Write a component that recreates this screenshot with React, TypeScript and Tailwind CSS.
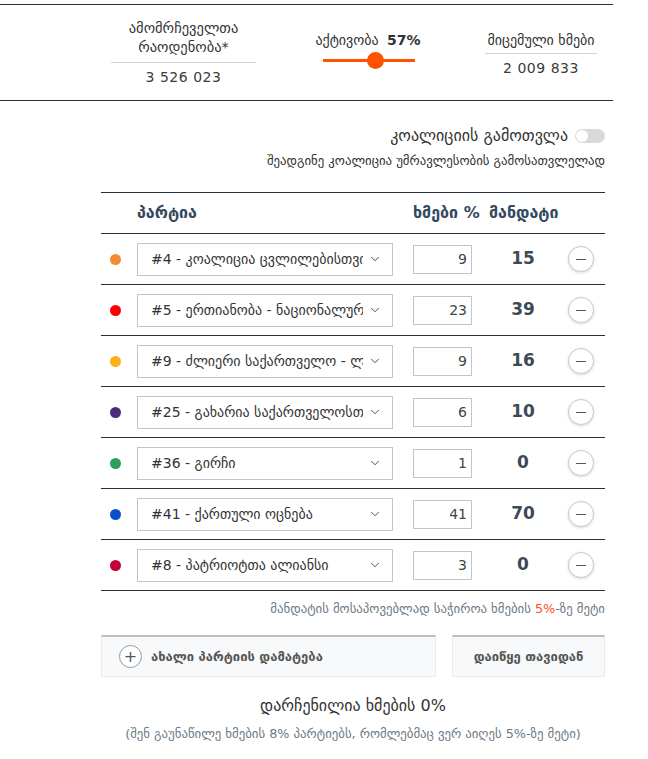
import React from 'react';
import { ChevronDown } from 'lucide-react';

interface Party {
	id: number;
	name: string;
	color: string;
	votes: number;
	seats: number;
}

const parties: Party[] = [
	{ id: 4, name: '#4 - კოალიცია ცვლილებისთვის', color: '#f28c30', votes: 9, seats: 15 },
	{ id: 5, name: '#5 - ერთიანობა - ნაციონალური მოძრაობა', color: '#ff0000', votes: 23, seats: 39 },
	{ id: 9, name: '#9 - ძლიერი საქართველო - ლელო', color: '#fdb018', votes: 9, seats: 16 },
	{ id: 25, name: '#25 - გახარია საქართველოსთვის', color: '#4b2d7f', votes: 6, seats: 10 },
	{ id: 36, name: '#36 - გირჩი', color: '#2e9e5b', votes: 1, seats: 0 },
	{ id: 41, name: '#41 - ქართული ოცნება', color: '#0d4fc7', votes: 41, seats: 70 },
	{ id: 8, name: '#8 - პატრიოტთა ალიანსი', color: '#c4003a', votes: 3, seats: 0 },
];

const App = () => {
	return (
		<div className="w-[648px] min-h-[759px] bg-white text-[#333] font-['DejaVu_Sans',sans-serif]">
			<div className="w-[613px] pt-[4px]">
				{/* Stats */}
				<div className="flex h-[97px] border-t border-b border-[#24313d]">
					<div className="ml-[111px] w-[145px] pt-[14px] text-center">
						<div className="text-[14.5px] leading-[19px]">ამომრჩეველთა</div>
						<div className="text-[14.5px] leading-[19px]">რაოდენობა*</div>
						<div className="mt-[5px] border-t border-[#cfd4d8]" />
						<div className="mt-[4px] text-[14px] leading-[20px] tracking-[0.5px] text-[#3b3b3b]">3 526 023</div>
					</div>
					<div className="ml-[56px] w-[112px] pt-[26px] text-center">
						<div className="text-[14px] leading-[19px]">
							აქტივობა <span className="ml-[4px] font-bold">57%</span>
						</div>
						<div className="relative mt-[2px] ml-[11px] h-[17px] w-[92px]">
							<div className="absolute left-0 right-0 top-[7px] h-[3px] bg-[#ff5200]" />
							<div className="absolute left-[44px] top-0 h-[17px] w-[17px] rounded-full bg-[#ff5200]" />
						</div>
					</div>
					<div className="ml-[61px] w-[112px] pt-[26px] text-center">
						<div className="text-[14px] leading-[19px]">მიცემული ხმები</div>
						<div className="mt-[3px] border-t border-[#cfd4d8]" />
						<div className="mt-[4px] text-[14px] leading-[20px] tracking-[0.5px] text-[#3b3b3b]">2 009 833</div>
					</div>
				</div>

				<div className="ml-[101px] w-[504px]">
					{/* Coalition toggle */}
					<div className="mt-[25px] flex h-[20px] items-center justify-end">
						<span className="text-[16px] text-[#333]">კოალიციის გამოთვლა</span>
						<div className="ml-[7px] flex h-[14px] w-[30px] items-center rounded-full bg-[#d8dadc] px-[1px]">
							<div className="h-[12px] w-[12px] rounded-full bg-white" />
						</div>
					</div>
					<div className="mt-[7px] text-right text-[12.8px] leading-[16px] text-[#333]">
						შეადგინე კოალიცია უმრავლესობის გამოსათვლელად
					</div>

					{/* Table */}
					<div className="mt-[23px] border-t border-[#24313d]">
						<div className="flex h-[41px] items-center border-b border-[#24313d] text-[16px] font-bold text-[#34495e]">
							<span className="ml-[36px] w-[276px]">პარტია</span>
							<span className="w-[76px]">ხმები %</span>
							<span>მანდატი</span>
						</div>
						{parties.map((p) => (
							<div key={p.id} className="flex h-[51px] items-center border-b border-[#24313d]">
								<div className="ml-[9px] h-[11px] w-[11px] rounded-full" style={{ backgroundColor: p.color }} />
								<div className="ml-[16px] flex h-[33px] w-[256px] items-center border border-[#bfc5ca] bg-white pl-[13px] pr-[10px] text-[14px] text-[#333]">
									<span className="mr-[5px] flex-1 overflow-hidden whitespace-nowrap">{p.name}</span>
									<ChevronDown size={14} strokeWidth={1.6} className="shrink-0 text-[#444]" />
								</div>
								<div className="ml-[20px] flex h-[29px] w-[59px] items-center justify-end border border-[#bfc5ca] pr-[4px] text-[14px] text-[#444]">
									{p.votes}
								</div>
								<div className="ml-[17px] w-[68px] text-center text-[17px] font-bold text-[#3d4a56]">{p.seats}</div>
								<div className="ml-[11px] flex h-[26px] w-[26px] items-center justify-center rounded-full border border-[#c5cbd0] bg-white shadow-[0_1px_3px_rgba(0,0,0,0.15)]">
									<div className="h-[1px] w-[10px] bg-[#555]" />
								</div>
							</div>
						))}
					</div>

					<div className="mt-[10px] text-right text-[12.8px] leading-[16px] text-[#6d7a86]">
						მანდატის მოსაპოვებლად საჭიროა ხმების <span className="text-[#ff4e1a]">5%</span>-ზე მეტი
					</div>

					{/* Buttons */}
					<div className="mt-[18px] flex gap-[16px]">
						<div className="flex h-[42px] w-[335px] items-center border border-t-2 border-[#e8ebed] border-t-[#b8bfc6] bg-[#f8f9fa] pl-[17px]">
							<div className="flex h-[23px] w-[23px] items-center justify-center rounded-full border border-[#8f99a3] bg-white text-[16px] leading-none text-[#555]">
								+
							</div>
							<span className="ml-[9px] text-[13px] font-bold text-[#555]">ახალი პარტიის დამატება</span>
						</div>
						<div className="flex h-[42px] w-[153px] items-center justify-center border border-t-2 border-[#e8ebed] border-t-[#b8bfc6] bg-[#f8f9fa]">
							<span className="text-[13px] font-bold text-[#555]">დაიწყე თავიდან</span>
						</div>
					</div>

					<div className="mt-[18px] text-center text-[16px] leading-[22px] text-[#333]">დარჩენილია ხმების 0%</div>
					<div className="mt-[9px] text-center text-[12.8px] leading-[16px] text-[#6d7a86]">
						(შენ გაუნაწილე ხმების 8% პარტიებს, რომლებმაც ვერ აიღეს 5%-ზე მეტი)
					</div>
				</div>
			</div>
		</div>
	);
};

export default App;
